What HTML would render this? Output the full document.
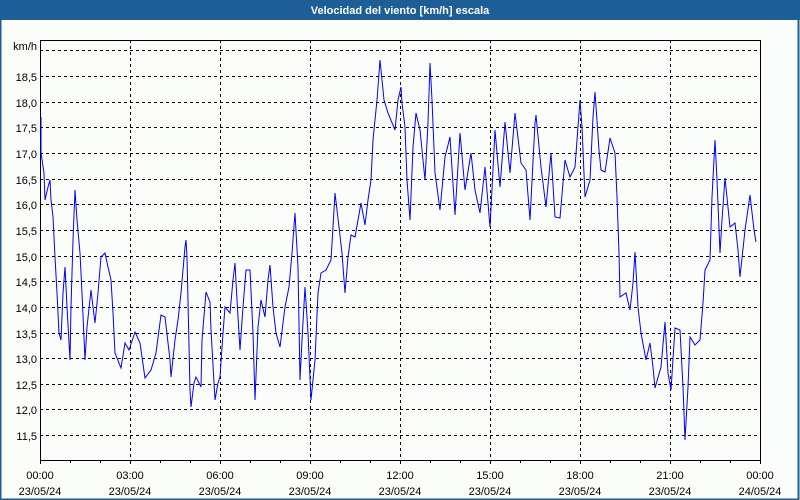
<!DOCTYPE html>
<html><head><meta charset="utf-8"><style>
html,body{margin:0;padding:0;width:800px;height:500px;overflow:hidden;background:#fbfdfb}
svg{display:block}
text{font-family:"Liberation Sans",Tahoma,sans-serif;font-size:11px;fill:#000}
</style></head><body>
<svg width="800" height="500" viewBox="0 0 800 500">
<rect x="0" y="0" width="800" height="500" fill="#fbfdfb"/>
<rect x="0.5" y="0.5" width="798" height="499" fill="none" stroke="#1d5e96" stroke-width="2"/>
<rect x="0" y="0" width="800" height="20" fill="#1d5e96"/>
<text x="400" y="14" text-anchor="middle" style="fill:#fff;font-weight:bold;font-size:11px">Velocidad del viento [km/h] escala</text>
<g stroke="#000" stroke-width="1" stroke-dasharray="3,3" fill="none">
<path d="M40 50.5H760M40 76.5H760M40 102.5H760M40 127.5H760M40 153.5H760M40 179.5H760M40 204.5H760M40 230.5H760M40 256.5H760M40 281.5H760M40 307.5H760M40 333.5H760M40 358.5H760M40 384.5H760M40 409.5H760M40 435.5H760"/>
<path d="M130.5 40V460M220.5 40V460M310.5 40V460M400.5 40V460M490.5 40V460M580.5 40V460M670.5 40V460"/>
</g>
<rect x="40.5" y="40.5" width="720" height="420" fill="none" stroke="#000" stroke-width="1"/>
<path stroke="#000" d="M40.5 460v4M70.5 460v3M100.5 460v3M130.5 460v4M160.5 460v3M190.5 460v3M220.5 460v4M250.5 460v3M280.5 460v3M310.5 460v4M340.5 460v3M370.5 460v3M400.5 460v4M430.5 460v3M460.5 460v3M490.5 460v4M520.5 460v3M550.5 460v3M580.5 460v4M610.5 460v3M640.5 460v3M670.5 460v4M700.5 460v3M730.5 460v3M760.5 460v4"/>
<g text-anchor="end">
<text x="37" y="50">km/h</text>
<text x="37" y="81">18,5</text><text x="37" y="107">18,0</text><text x="37" y="132">17,5</text><text x="37" y="158">17,0</text><text x="37" y="184">16,5</text><text x="37" y="209">16,0</text><text x="37" y="235">15,5</text><text x="37" y="261">15,0</text><text x="37" y="286">14,5</text><text x="37" y="312">14,0</text><text x="37" y="338">13,5</text><text x="37" y="363">13,0</text><text x="37" y="389">12,5</text><text x="37" y="414">12,0</text><text x="37" y="440">11,5</text>
</g>
<g text-anchor="middle">
<text x="40" y="479">00:00</text><text x="40" y="495">23/05/24</text>
<text x="130" y="479">03:00</text><text x="130" y="495">23/05/24</text>
<text x="220" y="479">06:00</text><text x="220" y="495">23/05/24</text>
<text x="310" y="479">09:00</text><text x="310" y="495">23/05/24</text>
<text x="400" y="479">12:00</text><text x="400" y="495">23/05/24</text>
<text x="490" y="479">15:00</text><text x="490" y="495">23/05/24</text>
<text x="580" y="479">18:00</text><text x="580" y="495">23/05/24</text>
<text x="670" y="479">21:00</text><text x="670" y="495">23/05/24</text>
<text x="760" y="479">00:00</text><text x="760" y="495">24/05/24</text>
</g>
<polyline fill="none" stroke="#0000ff" stroke-width="1" points="41,117 41,153 44,173 45,200 48,187 50,180 51,200 53,217 55,257 57,293 59,333 61,340 63,293 65,267 67,307 70,360 71,307 73,240 75,190 77,220 80,253 82,293 85,360 87,327 91,290 93,307 95,323 98,293 101,257 105,253 108,267 111,280 113,313 115,353 121,368 125,343 129,350 135,332 140,343 145,378 151,370 156,353 161,315 165,317 170,360 171,377 175,340 178,320 181,293 185,247 186,240 187,257 190,390 191,407 194,383 196,377 201,387 202,340 206,292 210,302 211,330 215,400 218,383 220,377 223,333 225,307 230,313 233,280 235,263 237,300 240,350 243,307 246,270 250,270 253,333 255,400 258,327 261,300 265,317 268,280 270,265 273,307 276,333 280,347 285,307 289,287 292,253 295,213 298,267 300,380 302,340 305,287 308,333 311,400 315,360 318,293 321,273 326,270 331,260 333,227 335,193 339,227 342,253 345,293 348,257 351,235 355,237 358,220 361,203 365,225 368,200 371,180 373,140 377,100 380,60 384,100 388,113 395,130 398,100 401,87 402,103 405,127 407,180 410,220 413,147 416,113 420,130 422,150 425,180 428,123 430,63 432,100 435,173 440,210 445,157 450,137 455,215 460,133 465,190 471,153 475,190 480,213 485,167 490,227 493,170 495,130 500,187 505,122 510,173 515,113 521,163 526,170 530,220 535,123 536,115 541,167 546,207 551,153 555,217 560,218 565,160 570,177 575,167 580,100 582,127 585,197 590,180 593,117 595,92 599,150 601,170 605,172 610,138 615,153 617,197 619,253 620,297 626,293 630,310 633,283 635,252 638,307 641,333 646,360 650,343 653,367 655,388 661,367 665,322 668,373 671,390 675,328 680,330 683,387 685,440 688,387 690,337 695,345 700,340 703,303 705,270 710,260 712,197 715,140 717,180 720,253 722,220 725,178 730,227 735,223 738,250 740,277 745,230 750,195 754,230 756,242"/>
</svg>
</body></html>
